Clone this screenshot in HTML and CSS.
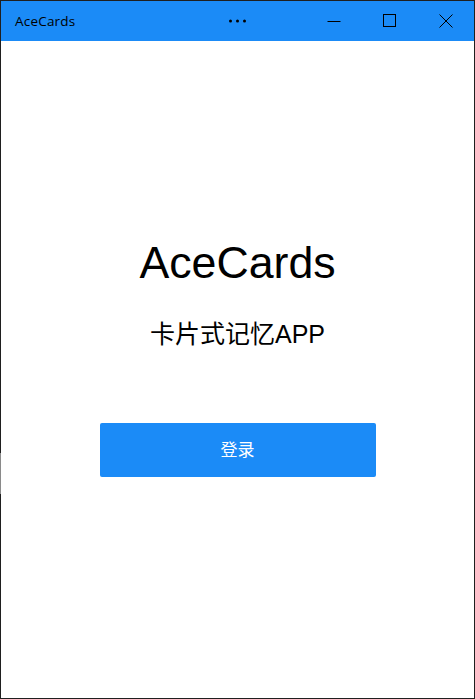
FILE: index.html
```html
<!DOCTYPE html>
<html lang="zh-CN">
<head>
<meta charset="utf-8">
<title>AceCards</title>
<link rel="stylesheet" href="styles.css">
</head>
<body>
<div class="window">
  <header class="titlebar">
    <div class="app-title">AceCards</div>
    <div class="more">
      <svg width="17" height="4" viewBox="0 0 17 4"><circle cx="1.5" cy="2" r="1.5"/><circle cx="8.5" cy="2" r="1.5"/><circle cx="15.5" cy="2" r="1.5"/></svg>
    </div>
    <div class="captions">
      <div class="cap-btn">
        <svg width="14" height="14" viewBox="0 0 14 14"><path d="M0.5 7.5H13.5" stroke="#000" stroke-width="1" fill="none"/></svg>
      </div>
      <div class="cap-btn">
        <svg width="14" height="14" viewBox="0 0 14 14"><rect x="0.5" y="0.5" width="12" height="12" stroke="#000" stroke-width="1" fill="none"/></svg>
      </div>
      <div class="cap-btn">
        <svg width="14" height="14" viewBox="0 0 14 14"><path d="M0.5 0.5L13.5 13.5M13.5 0.5L0.5 13.5" stroke="#000" stroke-width="1" fill="none"/></svg>
      </div>
    </div>
  </header>
  <main class="content">
    <h1 class="headline">AceCards</h1>
    <p class="tagline">卡片式记忆APP</p>
    <button class="login">登录</button>
  </main>
  <div class="grip"></div>
</div>
</body>
</html>
```
FILE: styles.css
```css
html, body {
  margin: 0;
  padding: 0;
  background: #fff;
}
.window {
  position: relative;
  width: 475px;
  height: 699px;
  box-sizing: border-box;
  border: 1px solid #1f1f1f;
  display: flex;
  flex-direction: column;
  background: #fff;
}
.titlebar {
  height: 40px;
  flex: none;
  background: #1b8bf7;
  display: grid;
  grid-template-columns: 1fr auto 1fr;
  align-items: center;
}
.app-title {
  padding-left: 14px;
  font-family: "Open Sans", "Noto Sans", sans-serif;
  font-size: 13.5px;
  letter-spacing: 0.2px;
  color: #000;
  line-height: 40px;
}
.more {
  display: flex;
  align-items: center;
  height: 40px;
}
.more svg {
  fill: #000;
  display: block;
}
.captions {
  display: flex;
  justify-content: flex-end;
  height: 40px;
}
.cap-btn {
  width: 56px;
  height: 40px;
  display: flex;
  align-items: center;
  justify-content: center;
}
.cap-btn svg {
  display: block;
}
.content {
  flex: 1;
  display: flex;
  flex-direction: column;
  align-items: center;
  padding-top: 197px;
}
.headline {
  margin: 0;
  font-family: "Liberation Sans", Arial, sans-serif;
  font-weight: normal;
  font-size: 44.7px;
  line-height: 50px;
  color: #000;
}
.tagline {
  margin: 31px 0 0;
  font-family: "Liberation Sans", "Noto Sans CJK SC", sans-serif;
  font-size: 25px;
  line-height: 30px;
  color: #000;
}
.login {
  margin-top: 74px;
  width: 276px;
  height: 54px;
  border: none;
  border-radius: 2px;
  background: #1b8bf7;
  color: #fff;
  font-family: "Noto Sans CJK SC", sans-serif;
  font-size: 17px;
  padding: 0 0 3px;
}
.grip {
  position: absolute;
  left: -1px;
  top: 452px;
  width: 1px;
  height: 41px;
  background: #8a8a8a;
}
```
